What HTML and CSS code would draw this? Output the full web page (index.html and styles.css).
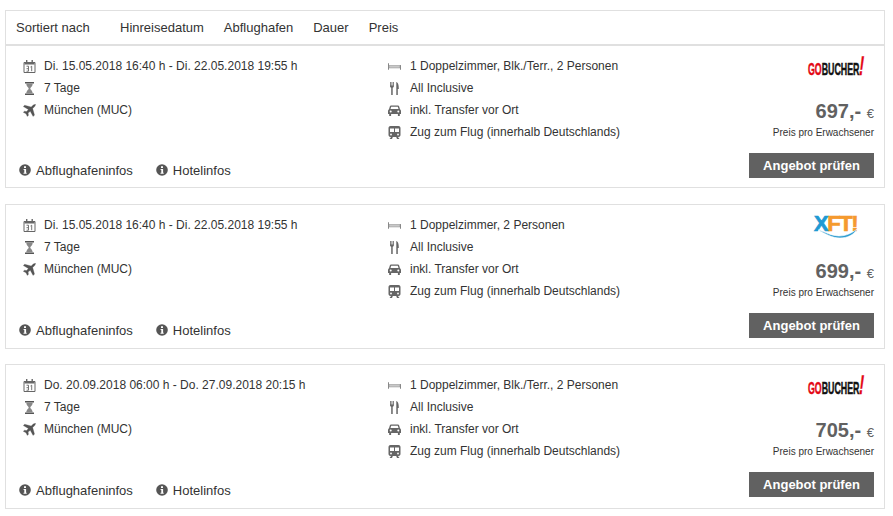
FILE: index.html
```html
<!DOCTYPE html>
<html lang="de">
<head>
  <meta charset="UTF-8">
  <title>Angebote</title>
  <link rel="stylesheet" href="styles.css">
</head>
<body>
<svg class="defs" width="0" height="0">
  <symbol id="i-cal" viewBox="0 0 12 13">
    <path d="M.5 2.500h11v10H.5z" fill="none" stroke="#666"/>
    <path d="M1 2h10v2.500H1zM2.500 0h1.400v2H2.500zM8 0h1.400v2H8z" fill="#666"/>
    <path d="M3 6.200h2v5H3M3 8.700h1.600M7 7l1.200-.8v5" fill="none" stroke="#666" stroke-width=".9"/>
  </symbol>
  <symbol id="i-glass" viewBox="0 0 10 13">
    <path d="M.5 0h9v1.400h-9zM.5 11.600h9V13h-9z" fill="#555"/>
    <path d="M1.800 1.400h6.400C8.200 4.500 5.800 5.200 5.800 6.500s2.400 2 2.400 5.100H1.800c0-3.100 2.400-3.800 2.400-5.100S1.800 4.500 1.800 1.400z" fill="#888"/>
  </symbol>
  <symbol id="i-plane" viewBox="0 0 14 13">
    <path d="M13.700.3c-.8-.7-2.100-.3-3 .6L8.800 2.800 1.800.8.300 2.300 5.800 5.400 3.900 7.700 1.500 7.300.3 8.500l2.900 1.500 1.500 2.900 1.200-1.200-.4-2.400 2.300-1.900 3.100 5.500 1.500-1.500-2-7 1.900-1.900c.9-.9 1.400-2.400.4-3.100z" fill="#555" stroke="#555" stroke-width=".3"/>
  </symbol>
  <symbol id="i-bed" viewBox="0 0 14 7">
    <path d="M.5 0v7M13.500 2v5" stroke="#777" fill="none"/>
    <path d="M1 2.500h12v2.500H1z" fill="#ccc" stroke="#888" stroke-width=".6"/>
  </symbol>
  <symbol id="i-food" viewBox="0 0 9 13">
    <path d="M0 0v4c0 1 .6 1.600 1.200 1.800V13h1.500V5.800C3.300 5.600 3.900 5 3.900 4V0H3.100v3.500H2.400V0H1.500v3.500H.8V0z" fill="#666"/>
    <path d="M6.300 13V0C8 .6 8.800 2.500 8.800 7H7.800v6z" fill="#666"/>
  </symbol>
  <symbol id="i-car" viewBox="0 0 13 11">
    <path d="M3 .5h7c.5 0 .9.300 1.100.8L12 4.200c.6.400 1 1 1 1.700V9h-1.200v2H9.900V9H3.100v2H1.200V9H0V5.900c0-.7.400-1.300 1-1.700l.9-2.900C2.100.8 2.500.5 3 .5zm.2 1.300-.7 2.300h8l-.7-2.300z" fill="#666"/>
    <circle cx="2.700" cy="6.400" r="1" fill="#fff"/>
    <circle cx="10.300" cy="6.400" r="1" fill="#fff"/>
  </symbol>
  <symbol id="i-train" viewBox="0 0 12 13">
    <path d="M2 0h8c1.100 0 2 .9 2 2v7c0 1.100-.9 2-2 2H2c-1.100 0-2-.9-2-2V2C0 .9.900 0 2 0zm-.500 2.500v3.500h4V2.500zm5 0V6h4V2.500z" fill="#666" fill-rule="evenodd"/>
    <path d="M1 13l2-2.500h1.500L3.500 13zM11 13l-2-2.500H7.500l1 2.500z" fill="#666"/>
    <circle cx="2.500" cy="8.500" r=".9" fill="#fff"/>
    <circle cx="9.500" cy="8.500" r=".9" fill="#fff"/>
  </symbol>
  <symbol id="i-info" viewBox="0 0 12 12">
    <circle cx="6" cy="6" r="5.800" fill="#555"/>
    <path d="M5 2.300h2v1.800H5zM4.600 5h2.500v3.700h.6v1H4.500v-1h.8V6h-.7z" fill="#fff"/>
  </symbol>
</svg>

<div class="sortbar">
  <span class="sort-label">Sortiert nach</span>
  <a class="sort-link">Hinreisedatum</a>
  <a class="sort-link">Abflughafen</a>
  <a class="sort-link">Dauer</a>
  <a class="sort-link">Preis</a>
</div>

<div class="card card-first">
  <div class="col-left">
    <div class="rows">
      <div class="row"><svg class="ico"><use href="#i-cal"/></svg>Di. 15.05.2018 16:40 h - Di. 22.05.2018 19:55 h</div>
      <div class="row"><svg class="ico"><use href="#i-glass"/></svg>7 Tage</div>
      <div class="row"><svg class="ico"><use href="#i-plane"/></svg>München (MUC)</div>
    </div>
    <div class="links">
      <a class="link"><svg class="ico-info"><use href="#i-info"/></svg>Abflughafeninfos</a>
      <a class="link"><svg class="ico-info"><use href="#i-info"/></svg>Hotelinfos</a>
    </div>
  </div>
  <div class="col-mid">
    <div class="row"><svg class="ico"><use href="#i-bed"/></svg>1 Doppelzimmer, Blk./Terr., 2 Personen</div>
    <div class="row"><svg class="ico"><use href="#i-food"/></svg>All Inclusive</div>
    <div class="row"><svg class="ico"><use href="#i-car"/></svg>inkl. Transfer vor Ort</div>
    <div class="row"><svg class="ico"><use href="#i-train"/></svg>Zug zum Flug (innerhalb Deutschlands)</div>
  </div>
  <div class="col-right">
    <div class="logo logo-go"><span class="go">GO</span>BUCHER<span class="bang">!</span></div>
    <div class="price">697,- <span class="cur">€</span></div>
    <div class="per">Preis pro Erwachsener</div>
    <button class="btn">Angebot prüfen</button>
  </div>
</div>

<div class="card">
  <div class="col-left">
    <div class="rows">
      <div class="row"><svg class="ico"><use href="#i-cal"/></svg>Di. 15.05.2018 16:40 h - Di. 22.05.2018 19:55 h</div>
      <div class="row"><svg class="ico"><use href="#i-glass"/></svg>7 Tage</div>
      <div class="row"><svg class="ico"><use href="#i-plane"/></svg>München (MUC)</div>
    </div>
    <div class="links">
      <a class="link"><svg class="ico-info"><use href="#i-info"/></svg>Abflughafeninfos</a>
      <a class="link"><svg class="ico-info"><use href="#i-info"/></svg>Hotelinfos</a>
    </div>
  </div>
  <div class="col-mid">
    <div class="row"><svg class="ico"><use href="#i-bed"/></svg>1 Doppelzimmer, 2 Personen</div>
    <div class="row"><svg class="ico"><use href="#i-food"/></svg>All Inclusive</div>
    <div class="row"><svg class="ico"><use href="#i-car"/></svg>inkl. Transfer vor Ort</div>
    <div class="row"><svg class="ico"><use href="#i-train"/></svg>Zug zum Flug (innerhalb Deutschlands)</div>
  </div>
  <div class="col-right">
    <div class="logo logo-xft">
      <span class="x">X</span>FT!
      <svg class="wave" viewBox="0 0 40 9"><path d="M0 1c8 2 13 6 21 6 7 0 13-3 18-7-3 6-10 9-17 9C14 9 8 5 0 1z" fill="#2a9bd0" stroke="#fff" stroke-width=".6"/></svg>
    </div>
    <div class="price">699,- <span class="cur">€</span></div>
    <div class="per">Preis pro Erwachsener</div>
    <button class="btn">Angebot prüfen</button>
  </div>
</div>

<div class="card">
  <div class="col-left">
    <div class="rows">
      <div class="row"><svg class="ico"><use href="#i-cal"/></svg>Do. 20.09.2018 06:00 h - Do. 27.09.2018 20:15 h</div>
      <div class="row"><svg class="ico"><use href="#i-glass"/></svg>7 Tage</div>
      <div class="row"><svg class="ico"><use href="#i-plane"/></svg>München (MUC)</div>
    </div>
    <div class="links">
      <a class="link"><svg class="ico-info"><use href="#i-info"/></svg>Abflughafeninfos</a>
      <a class="link"><svg class="ico-info"><use href="#i-info"/></svg>Hotelinfos</a>
    </div>
  </div>
  <div class="col-mid">
    <div class="row"><svg class="ico"><use href="#i-bed"/></svg>1 Doppelzimmer, Blk./Terr., 2 Personen</div>
    <div class="row"><svg class="ico"><use href="#i-food"/></svg>All Inclusive</div>
    <div class="row"><svg class="ico"><use href="#i-car"/></svg>inkl. Transfer vor Ort</div>
    <div class="row"><svg class="ico"><use href="#i-train"/></svg>Zug zum Flug (innerhalb Deutschlands)</div>
  </div>
  <div class="col-right">
    <div class="logo logo-go"><span class="go">GO</span>BUCHER<span class="bang">!</span></div>
    <div class="price">705,- <span class="cur">€</span></div>
    <div class="per">Preis pro Erwachsener</div>
    <button class="btn">Angebot prüfen</button>
  </div>
</div>
</body>
</html>
```

FILE: styles.css
```css
* { box-sizing: border-box; }
body {
  margin: 0;
  padding: 10px 8px 0 5px;
  background: #fff;
  color: #333;
  font-family: "Liberation Sans", Arial, sans-serif;
  font-size: 12px;
}
.defs { position: absolute; }

.sortbar {
  display: flex;
  align-items: center;
  height: 36px;
  padding: 0 10px;
  border: 1px solid #e0e0e0;
  border-bottom-width: 2px;
  font-size: 13px;
  color: #333;
}
.sort-label { width: 104px; }
.sort-link { margin-right: 20px; }

.card {
  display: flex;
  height: 145px;
  margin-bottom: 15px;
  padding: 9px 10px 7px 13px;
  border: 1px solid #e0e0e0;
}
.card-first {
  height: 142px;
  margin-bottom: 16px;
  padding-bottom: 6px;
  border-top: 0;
}

.col-left {
  display: flex;
  flex-direction: column;
  justify-content: space-between;
  width: 369px;
}
.rows { padding-left: 4px; }
.col-mid { width: 350px; }
.col-mid .row { gap: 9px; }
.col-right {
  flex: 1;
  display: flex;
  flex-direction: column;
  align-items: flex-end;
}

.row {
  display: flex;
  align-items: center;
  height: 22px;
  gap: 8px;
  white-space: nowrap;
}
.ico { width: 13px; height: 13px; flex: none; }

.links {
  display: flex;
  gap: 23px;
  height: 22px;
  align-items: center;
  font-size: 13px;
}
.link { display: flex; align-items: center; gap: 5px; }
.ico-info { width: 12px; height: 12px; }

.logo {
  height: 27px;
  white-space: nowrap;
  color: #111;
}
.logo-go {
  padding-top: 4px;
  margin-right: 10px;
  font-size: 17px;
  font-weight: bold;
  line-height: 16px;
  -webkit-text-stroke: .5px;
  transform: scaleX(.52);
  transform-origin: right top;
}
.go, .bang { color: #e30613; }
.bang {
  display: inline-block;
  font-size: 27px;
  line-height: 14px;
  transform: skewX(-14deg);
}
.logo-xft {
  position: relative;
  height: 28px;
  margin-right: 17px;
  font-size: 22px;
  font-weight: bold;
  line-height: 20px;
  color: #f59a2e;
  letter-spacing: -1.500px;
  -webkit-text-stroke: .7px;
}
.x { color: #1e9ad3; }
.wave {
  position: absolute;
  left: 4px;
  top: 15px;
  width: 40px;
  height: 9px;
}

.price {
  margin-top: 17px;
  height: 25px;
  font-size: 20px;
  font-weight: bold;
  line-height: 25px;
  color: #616161;
}
.cur { font-size: 13px; font-weight: normal; }
.per { margin-top: 3px; font-size: 10px; line-height: 12px; color: #333; }
.btn {
  width: 125px;
  height: 25px;
  margin-top: 14px;
  padding: 0;
  border: 0;
  background: #616161;
  color: #fff;
  font-family: inherit;
  font-size: 13px;
  font-weight: bold;
}
```
